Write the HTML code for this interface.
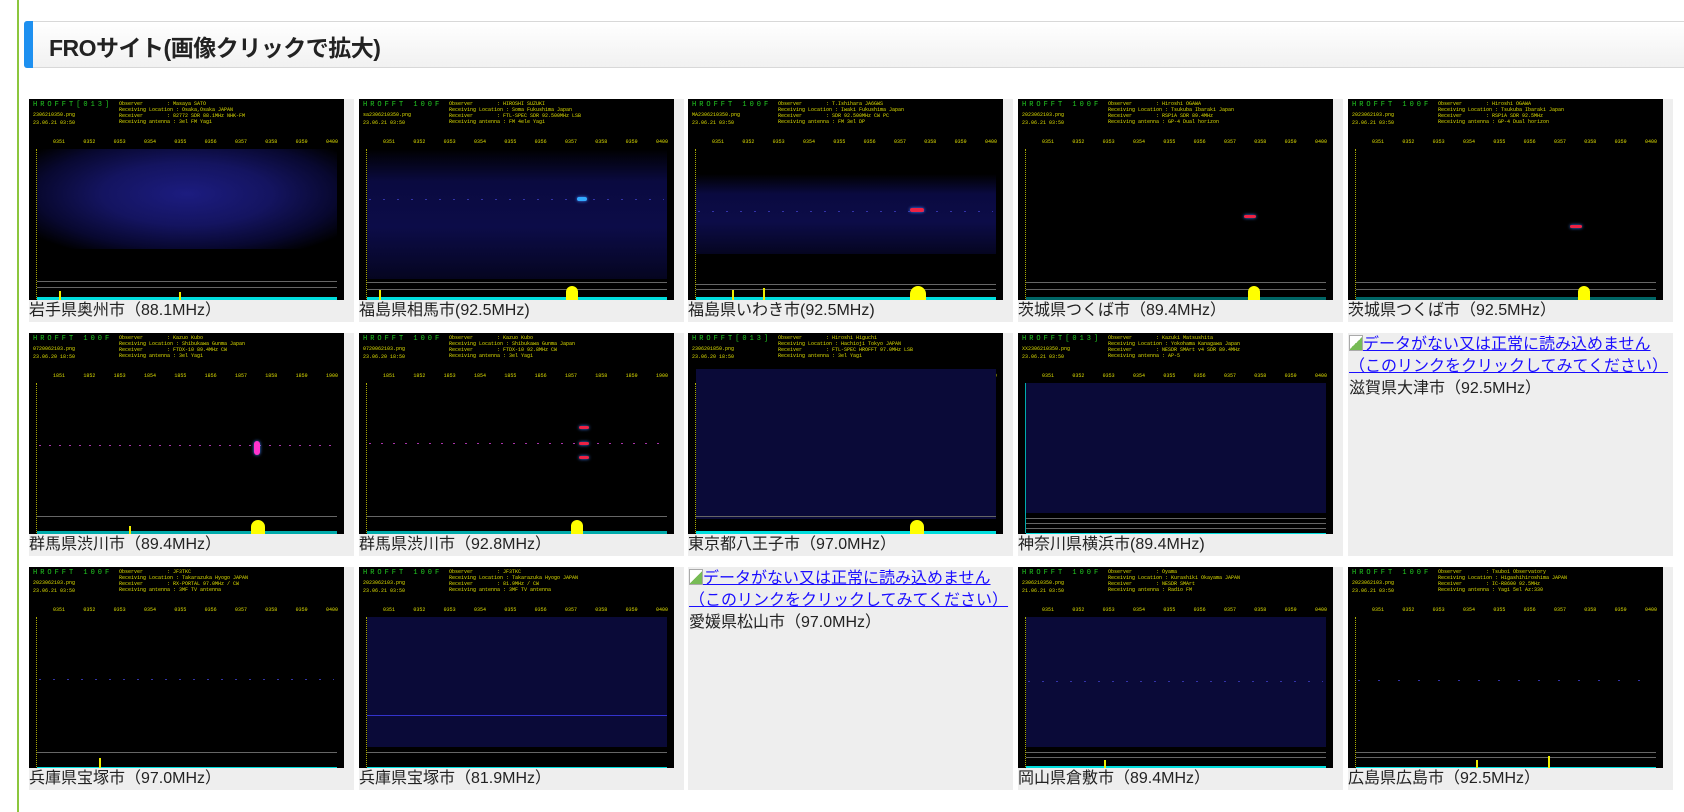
<!DOCTYPE html>
<html><head><meta charset="utf-8">
<style>
*{margin:0;padding:0;box-sizing:border-box}
body{width:1684px;height:812px;background:#fff;position:relative;overflow:hidden;font-family:"Liberation Sans","Noto Sans CJK JP",sans-serif}
.gl{position:absolute;left:17px;top:0;width:2px;height:812px;background:#8cc63e}
.hd{position:absolute;left:24px;top:21px;width:1670px;height:47px;border:1px solid #d8d8d8;border-left:none;border-radius:3px;background:linear-gradient(#fff,#f1f1f1)}
.hd:before{content:"";position:absolute;left:0;top:-1px;width:9px;height:47px;background:#1e90f0;border-radius:3px 0 0 3px}
.hd h1{position:absolute;left:25px;top:7px;font-size:23px;font-weight:bold;color:#222;letter-spacing:-0.5px}
.c{position:absolute;width:325px;height:223px;background:#eee}
.sp{position:absolute;left:0;top:0;width:315px;height:201px;background:#000;overflow:hidden}
.sp .t{position:absolute;left:4px;top:2px;color:#2c2;font:7px "Liberation Mono",monospace;letter-spacing:3px}
.sp .m{position:absolute;left:4px;top:12px;color:#dd0;font:5px "Liberation Mono",monospace;line-height:8px}
.sp .o{position:absolute;left:90px;top:2px;color:#dd0;font:5px "Liberation Mono",monospace;line-height:6px;white-space:pre}
.sp .x{position:absolute;left:24px;top:40px;width:285px;color:#dd0;font:5px "Liberation Mono",monospace;display:flex;justify-content:space-between}
.sp .p{position:absolute;left:8px;top:50px;width:300px;height:130px}
.sp .n1{background:radial-gradient(ellipse at 50% 45%,#1c1c80 0,#141460 40%,#080830 70%,#000 90%)}
.sp .n2{background:linear-gradient(#000 0,#0a0a40 25%,#0c0c48 60%,#080830 85%,#050520)}
.sp .n3{background:#000}
.sp .n4{background:#0a0a38}
.sp .hl{position:absolute;left:8px;width:300px;height:1px;background:#666}
.sp .cy{position:absolute;left:8px;bottom:0;width:300px;height:3px;background:#0dd}
.sp .ax{position:absolute;left:7px;top:50px;width:1px;height:150px;border-left:1px dotted #aa0}
.sp .y{position:absolute;width:2px;background:#ee0;bottom:0}
.sp .bl{position:absolute;width:16px;height:14px;bottom:0;background:#ff0;border-radius:8px 8px 0 0}
.sp .sig{position:absolute;left:10px;width:295px;height:1px;background:repeating-linear-gradient(90deg,#33a 0 2px,transparent 2px 14px)}
.sp .hot{position:absolute;width:14px;height:4px;background:#e24;border-radius:3px;box-shadow:0 0 3px #48f}
.lb{position:absolute;left:0;top:202px;font-size:16px;color:#222;line-height:20px}
.nd{position:absolute;left:1px;top:1px;font-size:16px;line-height:22px;color:#00e;width:323px}
.nd a{color:#1a0dff;text-decoration:underline}
.nd i{display:inline-block;width:14px;height:16px;border:1px solid #aaa;background:linear-gradient(135deg,#fff 50%,#7b5 50%);vertical-align:-2px}
.nd .lb2{color:#222}
</style></head><body>
<div class="gl"></div>
<div class="hd"><h1>FROサイト(画像クリックで拡大)</h1></div>

<!-- row 1 -->
<div class="c" style="left:29px;top:99px"><div class="sp"><div class="t">HROFFT[013]</div><div class="m">2306210350.png<br>23.06.21 03:50</div><div class="o">Observer        : Masaya SATO
Receiving Location : Osaka,Osaka JAPAN
Receiver        : 82772 SDR 88.1MHz NHK-FM
Receiving antenna : 3el FM Yagi</div><div class="x"><span>0351</span><span>0352</span><span>0353</span><span>0354</span><span>0355</span><span>0356</span><span>0357</span><span>0358</span><span>0359</span><span>0400</span></div><div class="p n1" style="height:100px"></div><div class="ax"></div><div class="hl" style="top:182px"></div><div class="hl" style="top:188px"></div><div class="cy"></div><div class="y" style="left:30px;height:9px"></div><div class="y" style="left:150px;height:8px"></div></div><div class="lb">岩手県奥州市（88.1MHz）</div></div>

<div class="c" style="left:359px;top:99px"><div class="sp"><div class="t">HROFFT 100F</div><div class="m">sa2306210350.png<br>23.06.21 03:50</div><div class="o">Observer        : HIROSHI SUZUKI
Receiving Location : Soma Fukushima Japan
Receiver        : FTL-SPEC SDR 92.500MHz LSB
Receiving antenna : FM 4ele Yagi</div><div class="x"><span>0351</span><span>0352</span><span>0353</span><span>0354</span><span>0355</span><span>0356</span><span>0357</span><span>0358</span><span>0359</span><span>0400</span></div><div class="p n2"></div><div class="ax"></div><div class="sig" style="top:100px"></div><div class="hot" style="left:218px;top:98px;width:10px;background:#3af"></div><div class="hl" style="top:183px"></div><div class="hl" style="top:190px"></div><div class="cy"></div><div class="bl" style="left:207px;width:12px"></div><div class="y" style="left:20px;height:10px"></div></div><div class="lb">福島県相馬市(92.5MHz)</div></div>

<div class="c" style="left:688px;top:99px"><div class="sp"><div class="t">HROFFT 100F</div><div class="m">MA2306210350.png<br>23.06.21 03:50</div><div class="o">Observer        : T.Ishihara JA6GWS
Receiving Location : Iwaki Fukushima Japan
Receiver        : SDR 92.500MHz CW PC
Receiving antenna : FM 3el DP</div><div class="x"><span>0351</span><span>0352</span><span>0353</span><span>0354</span><span>0355</span><span>0356</span><span>0357</span><span>0358</span><span>0359</span><span>0400</span></div><div class="p n2" style="top:75px;height:80px"></div><div class="ax"></div><div class="sig" style="top:112px"></div><div class="hot" style="left:222px;top:109px"></div><div class="hl" style="top:185px"></div><div class="hl" style="top:190px"></div><div class="cy"></div><div class="bl" style="left:222px;width:16px;height:14px"></div><div class="y" style="left:44px;height:10px"></div><div class="y" style="left:75px;height:12px"></div></div><div class="lb">福島県いわき市(92.5MHz)</div></div>

<div class="c" style="left:1018px;top:99px"><div class="sp"><div class="t">HROFFT 100F</div><div class="m">2023062103.png<br>23.06.21 03:50</div><div class="o">Observer        : Hiroshi OGAWA
Receiving Location : Tsukuba Ibaraki Japan
Receiver        : RSP1A SDR 89.4MHz
Receiving antenna : GP-4 Dual horizon</div><div class="x"><span>0351</span><span>0352</span><span>0353</span><span>0354</span><span>0355</span><span>0356</span><span>0357</span><span>0358</span><span>0359</span><span>0400</span></div><div class="p n3"></div><div class="ax"></div><div class="hot" style="left:226px;top:116px;width:12px;height:3px"></div><div class="hl" style="top:183px"></div><div class="hl" style="top:190px"></div><div class="cy" style="background:#066"></div><div class="bl" style="left:230px;width:12px"></div></div><div class="lb">茨城県つくば市（89.4MHz）</div></div>

<div class="c" style="left:1348px;top:99px"><div class="sp"><div class="t">HROFFT 100F</div><div class="m">2023062103.png<br>23.06.21 03:50</div><div class="o">Observer        : Hiroshi OGAWA
Receiving Location : Tsukuba Ibaraki Japan
Receiver        : RSP1A SDR 92.5MHz
Receiving antenna : GP-4 Dual horizon</div><div class="x"><span>0351</span><span>0352</span><span>0353</span><span>0354</span><span>0355</span><span>0356</span><span>0357</span><span>0358</span><span>0359</span><span>0400</span></div><div class="p n3"></div><div class="ax"></div><div class="hot" style="left:222px;top:126px;width:12px;height:3px"></div><div class="hl" style="top:183px"></div><div class="hl" style="top:190px"></div><div class="cy" style="background:#066"></div><div class="bl" style="left:230px;width:12px"></div></div><div class="lb">茨城県つくば市（92.5MHz）</div></div>

<!-- row 2 -->
<div class="c" style="left:29px;top:333px"><div class="sp"><div class="t">HROFFT 100F</div><div class="m">0720062103.png<br>23.06.20 18:50</div><div class="o">Observer        : Kazuo Kubo
Receiving Location : Shibukawa Gunma Japan
Receiver        : FTDX-10 89.4MHz CW
Receiving antenna : 3el Yagi</div><div class="x"><span>1851</span><span>1852</span><span>1853</span><span>1854</span><span>1855</span><span>1856</span><span>1857</span><span>1858</span><span>1859</span><span>1900</span></div><div class="p n3"></div><div class="ax"></div><div class="sig" style="top:112px;background:repeating-linear-gradient(90deg,#a3a 0 2px,transparent 2px 10px)"></div><div class="hot" style="left:225px;top:108px;width:6px;height:14px;background:#f3c"></div><div class="hl" style="top:183px"></div><div class="cy" style="background:#0aa"></div><div class="bl" style="left:222px;width:14px"></div><div class="y" style="left:100px;height:8px"></div></div><div class="lb">群馬県渋川市（89.4MHz）</div></div>

<div class="c" style="left:359px;top:333px"><div class="sp"><div class="t">HROFFT 100F</div><div class="m">0720062103.png<br>23.06.20 18:50</div><div class="o">Observer        : Kazuo Kubo
Receiving Location : Shibukawa Gunma Japan
Receiver        : FTDX-10 92.8MHz CW
Receiving antenna : 3el Yagi</div><div class="x"><span>1851</span><span>1852</span><span>1853</span><span>1854</span><span>1855</span><span>1856</span><span>1857</span><span>1858</span><span>1859</span><span>1900</span></div><div class="p n3"></div><div class="ax"></div><div class="sig" style="top:110px;background:repeating-linear-gradient(90deg,#a3a 0 2px,transparent 2px 12px)"></div><div class="hot" style="left:220px;top:93px;width:10px;height:3px"></div><div class="hot" style="left:220px;top:109px;width:10px;height:3px"></div><div class="hot" style="left:220px;top:123px;width:10px;height:3px"></div><div class="hl" style="top:183px"></div><div class="cy" style="background:#0aa"></div><div class="bl" style="left:212px;width:12px"></div></div><div class="lb">群馬県渋川市（92.8MHz）</div></div>

<div class="c" style="left:688px;top:333px"><div class="sp"><div class="t">HROFFT[013]</div><div class="m">2306201850.png<br>23.06.20 18:50</div><div class="o">Observer        : Hiroshi Higuchi
Receiving Location : Hachioji Tokyo JAPAN
Receiver        : FTL-SPEC HROFFT 97.0MHz LSB
Receiving antenna : 3el Yagi</div><div class="x" style="top:40px"><span>1852</span><span>1853</span><span>1854</span><span>1855</span><span>1856</span><span>1857</span><span>1858</span><span>1859</span><span>1900</span></div><div class="p n4" style="top:36px;height:150px"></div><div class="ax"></div><div class="hl" style="top:183px"></div><div class="cy"></div><div class="bl" style="left:222px;width:14px"></div></div><div class="lb">東京都八王子市（97.0MHz）</div></div>

<div class="c" style="left:1018px;top:333px"><div class="sp"><div class="t">HROFFT[013]</div><div class="m">XX2306210350.png<br>23.06.21 03:50</div><div class="o">Observer        : Kazuki Matsushita
Receiving Location : Yokohama Kanagawa Japan
Receiver        : NESDR SMArt v4 SDR 89.4MHz
Receiving antenna : AP-5</div><div class="x"><span>0351</span><span>0352</span><span>0353</span><span>0354</span><span>0355</span><span>0356</span><span>0357</span><span>0358</span><span>0359</span><span>0400</span></div><div class="p n4"></div><div class="ax" style="border-left:1px solid #0aa"></div><div class="hl" style="top:185px"></div><div class="hl" style="top:190px"></div><div class="hl" style="top:195px"></div><div class="cy" style="height:1px"></div></div><div class="lb">神奈川県横浜市(89.4MHz)</div></div>

<div class="c" style="left:1348px;top:333px"><div class="nd"><a><i></i>データがない又は正常に読み込めません（このリンクをクリックしてみてください）</a><div class="lb2">滋賀県大津市（92.5MHz）</div></div></div>

<!-- row 3 -->
<div class="c" style="left:29px;top:567px"><div class="sp"><div class="t">HROFFT 100F</div><div class="m">2023062103.png<br>23.06.21 03:50</div><div class="o">Observer        : JF3TKC
Receiving Location : Takarazuka Hyogo JAPAN
Receiver        : RX-PORTAL 97.0MHz / CW
Receiving antenna : 3MF TV antenna</div><div class="x"><span>0351</span><span>0352</span><span>0353</span><span>0354</span><span>0355</span><span>0356</span><span>0357</span><span>0358</span><span>0359</span><span>0400</span></div><div class="p n3"></div><div class="ax"></div><div class="sig" style="top:112px"></div><div class="hl" style="top:185px"></div><div class="cy" style="height:1px"></div><div class="y" style="left:70px;height:10px"></div></div><div class="lb">兵庫県宝塚市（97.0MHz）</div></div>

<div class="c" style="left:359px;top:567px"><div class="sp"><div class="t">HROFFT 100F</div><div class="m">2023062103.png<br>23.06.21 03:50</div><div class="o">Observer        : JF3TKC
Receiving Location : Takarazuka Hyogo JAPAN
Receiver        : 81.9MHz / CW
Receiving antenna : 3MF TV antenna</div><div class="x"><span>0351</span><span>0352</span><span>0353</span><span>0354</span><span>0355</span><span>0356</span><span>0357</span><span>0358</span><span>0359</span><span>0400</span></div><div class="p n4"></div><div class="ax"></div><div class="hl" style="top:148px;background:#33c"></div><div class="hl" style="top:185px"></div><div class="cy" style="height:1px"></div></div><div class="lb">兵庫県宝塚市（81.9MHz）</div></div>

<div class="c" style="left:688px;top:567px"><div class="nd"><a><i></i>データがない又は正常に読み込めません（このリンクをクリックしてみてください）</a><div class="lb2">愛媛県松山市（97.0MHz）</div></div></div>

<div class="c" style="left:1018px;top:567px"><div class="sp"><div class="t">HROFFT 100F</div><div class="m">2306210350.png<br>21.06.21 03:50</div><div class="o">Observer        : Oyama
Receiving Location : Kurashiki Okayama JAPAN
Receiver        : NESDR SMArt
Receiving antenna : Radio FM</div><div class="x"><span>0351</span><span>0352</span><span>0353</span><span>0354</span><span>0355</span><span>0356</span><span>0357</span><span>0358</span><span>0359</span><span>0400</span></div><div class="p n4"></div><div class="ax"></div><div class="sig" style="top:114px"></div><div class="hl" style="top:185px"></div><div class="hl" style="top:190px"></div><div class="cy" style="height:2px"></div><div class="y" style="left:86px;height:8px"></div></div><div class="lb">岡山県倉敷市（89.4MHz）</div></div>

<div class="c" style="left:1348px;top:567px"><div class="sp"><div class="t">HROFFT 100F</div><div class="m">2023062103.png<br>23.06.21 03:50</div><div class="o">Observer        : Tsuboi Observatory
Receiving Location : Higashihiroshima JAPAN
Receiver        : IC-R8600 92.5MHz
Receiving antenna : Yagi 5el Az:330</div><div class="x"><span>0351</span><span>0352</span><span>0353</span><span>0354</span><span>0355</span><span>0356</span><span>0357</span><span>0358</span><span>0359</span><span>0400</span></div><div class="p n3"></div><div class="ax"></div><div class="sig" style="top:113px;background:repeating-linear-gradient(90deg,#33a 0 2px,transparent 2px 20px)"></div><div class="hl" style="top:185px"></div><div class="hl" style="top:190px"></div><div class="cy" style="height:1px"></div><div class="y" style="left:128px;height:8px"></div><div class="y" style="left:200px;height:12px"></div></div><div class="lb">広島県広島市（92.5MHz）</div></div>
</body></html>
